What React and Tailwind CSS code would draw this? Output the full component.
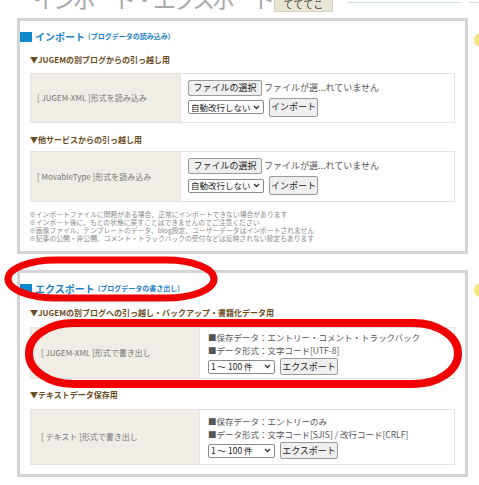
import React from "react";

const Chevron = () => (
  <svg width="7" height="5" viewBox="0 0 7 5" className="shrink-0">
    <path d="M1 1l2.5 2.5L6 1" fill="none" stroke="#333" strokeWidth="1.3" />
  </svg>
);

const Btn = ({ children, className = "" }) => (
  <span
    className={`flex items-center justify-center whitespace-nowrap rounded-[2px] border border-[#9a9a9a] bg-[#efefef] text-[9px] text-[#222] ${className}`}
  >
    {children}
  </span>
);

const Select = ({ children, className = "" }) => (
  <span
    className={`flex items-center justify-between whitespace-nowrap rounded-[2px] border border-[#8a8a8a] bg-white pl-[2px] pr-[3px] text-[8.5px] leading-none text-[#222] ${className}`}
  >
    <span>{children}</span>
    <Chevron />
  </span>
);

const Title = ({ main, sub }) => (
  <div className="flex h-[11px] items-center">
    <span className="h-[10px] w-[12px] bg-[#0f89cc]" />
    <span className="ml-[3px] text-[10px] font-bold leading-none text-[#1f82c6]">{main}</span>
    <span className="ml-[3px] text-[7px] font-bold leading-none text-[#1f82c6]">{sub}</span>
  </div>
);

const Heading = ({ children, className = "" }) => (
  <div className={`h-[10px] px-[10px] text-[8px] font-bold leading-[10px] text-[#6b4b1d] ${className}`}>
    {children}
  </div>
);

const ImportTable = ({ label, className = "" }) => (
  <div className={`mx-[10px] flex border border-[#e3e3e3] ${className}`}>
    <div className="flex w-[149px] items-center bg-[#efede6] pl-[6px] text-[8px] text-[#777]">
      {label}
    </div>
    <div className="flex flex-1 flex-col justify-center gap-[2px] border-l border-[#e3e3e3] pl-[7px]">
      <div className="flex h-[16px] items-center">
        <Btn className="h-[16px] w-[74px]">ファイルの選択</Btn>
        <span className="ml-[2px] whitespace-nowrap text-[9px] text-[#555]">ファイルが選...れていません</span>
      </div>
      <div className="flex h-[19px] items-center">
        <Select className="h-[14px] w-[76px]">自動改行しない</Select>
        <Btn className="ml-[5px] h-[19px] w-[49px]">インポート</Btn>
      </div>
    </div>
  </div>
);

const ExportTable = ({ label, lines, className = "" }) => (
  <div className={`mx-[10px] flex border border-[#e3e3e3] ${className}`}>
    <div className="flex w-[168px] items-center bg-[#efede6] pl-[10px] text-[8px] text-[#777]">
      {label}
    </div>
    <div className="flex flex-1 flex-col justify-center border-l border-[#e3e3e3] pl-[8px] text-[8.5px] leading-[13px] text-[#555]">
      {lines.map((l) => (
        <div key={l} className="whitespace-nowrap">{l}</div>
      ))}
      <div className="mt-[1px] flex h-[17px] items-center">
        <Select className="h-[14px] w-[67px]">1 ～ 100 件</Select>
        <Btn className="ml-[5px] h-[17px] w-[58px]">エクスポート</Btn>
      </div>
    </div>
  </div>
);

const notes = [
  "※インポートファイルに問題がある場合、正常にインポートできない場合があります",
  "※インポート後に、もとの状態に戻すことはできませんのでご注意ください",
  "※画像ファイル、テンプレートのデータ、blog設定、ユーザーデータはインポートされません",
  "※記事の公開・非公開、コメント・トラックバックの受付などは反映されない設定もあります",
];

export default function App() {
  return (
    <div
      className="relative h-[485px] w-[479px] overflow-hidden bg-white"
      style={{ fontFamily: '"Noto Sans CJK JP", "Noto Sans", sans-serif' }}
    >
      {/* cut-off page header */}
      <div className="flex h-[12px] items-end overflow-hidden">
        <span className="relative -top-[2px] ml-[33px] w-[238px] whitespace-nowrap text-[23px] leading-[23px] tracking-[-3px] text-[#a8a8a8]">
          インポート・エクスポート
        </span>
        <span className="ml-[3px] flex h-[14px] w-[59px] items-end justify-center border-x border-b border-[#d6d1bc] bg-[#e9e5d4] pb-[1px] text-[10px] leading-[12px] text-[#444]">
          てててこ
        </span>
        <span className="mb-[9px] ml-[14px] h-[1px] w-[116px] bg-[#cfe2ee]" />
        <span className="mb-[9px] ml-[7px] h-[1px] w-[10px] bg-[#cfe2ee]" />
      </div>

      {/* import */}
      <div className="ml-[17px] mt-[6px] w-[451px] border-[3px] border-[#d4d4d4] pb-[9px] pt-[10px]">
        <Title main="インポート" sub="(ブログデータの読み込み)" />
        <Heading className="mt-[13px]">▼JUGEMの別ブログからの引っ越し用</Heading>
        <ImportTable className="mt-[8px] h-[50px]" label="[ JUGEM-XML ]形式を読み込み" />
        <Heading className="mt-[12px]">▼他サービスからの引っ越し用</Heading>
        <ImportTable className="mt-[6px] h-[51px]" label="[ MovableType ]形式を読み込み" />
        <div className="mt-[8px] px-[9px] text-[6.8px] leading-[8px] text-[#8a8a8a]">
          {notes.map((n) => (
            <div key={n} className="whitespace-nowrap">{n}</div>
          ))}
        </div>
      </div>

      {/* export */}
      <div className="ml-[17px] mt-[16px] w-[451px] border-[3px] border-[#d4d4d4] pb-[9px] pt-[10px]">
        <Title main="エクスポート" sub="(ブログデータの書き出し)" />
        <Heading className="mt-[14px]">▼JUGEMの別ブログへの引っ越し・バックアップ・書籍化データ用</Heading>
        <ExportTable
          className="mt-[9px] h-[52px]"
          label="[ JUGEM-XML ]形式で書き出し"
          lines={["■保存データ：エントリー・コメント・トラックバック", "■データ形式：文字コード[UTF-8]"]}
        />
        <Heading className="mt-[11px]">▼テキストデータ保存用</Heading>
        <ExportTable
          className="mt-[9px] h-[56px]"
          label="[ テキスト ]形式で書き出し"
          lines={["■保存データ：エントリーのみ", "■データ形式：文字コード[SJIS] / 改行コード[CRLF]"]}
        />
      </div>

      {/* yellow markers at the right edge */}
      <span className="absolute left-[474px] top-[33px] h-[14px] w-[14px] rounded-full bg-[#f6e57a]" />
      <span className="absolute left-[474px] top-[283px] h-[14px] w-[14px] rounded-full bg-[#f6e57a]" />

      {/* red annotation marks */}
      <svg className="pointer-events-none absolute inset-0" width="479" height="485">
        <rect x="8" y="260" width="206" height="38" rx="48" ry="19" fill="none" stroke="#f00000" strokeWidth="7" />
        <rect x="29" y="323" width="429" height="61" rx="45" ry="30" fill="none" stroke="#f00000" strokeWidth="8" />
      </svg>
    </div>
  );
}
